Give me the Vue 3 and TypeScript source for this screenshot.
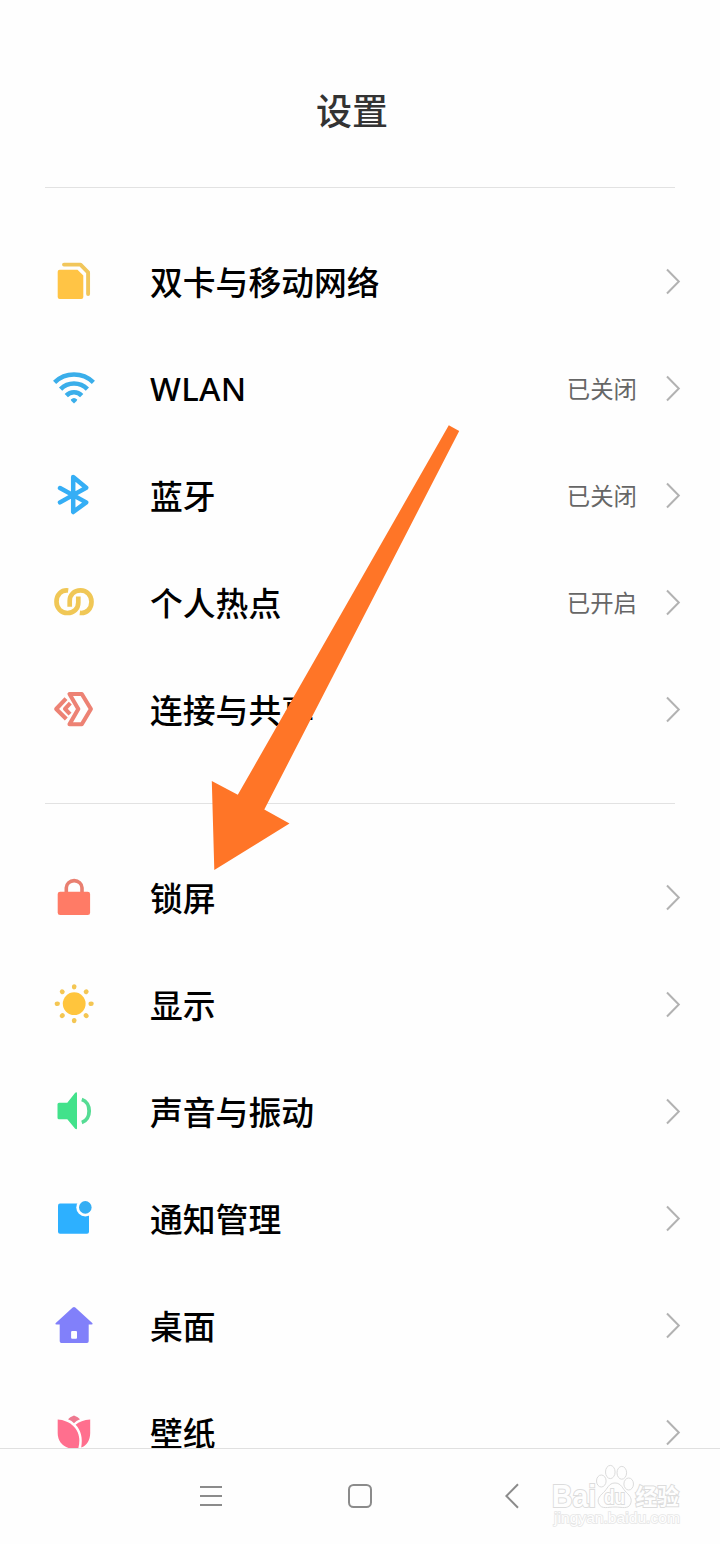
<script setup lang="ts">
interface Item {
  icon: string
  label: string
  latin?: boolean
  status?: string
}

const groups: Item[][] = [
  [
    { icon: 'sim', label: '双卡与移动网络' },
    { icon: 'wifi', label: 'WLAN', latin: true, status: '已关闭' },
    { icon: 'bluetooth', label: '蓝牙', status: '已关闭' },
    { icon: 'hotspot', label: '个人热点', status: '已开启' },
    { icon: 'share', label: '连接与共享' },
  ],
  [
    { icon: 'lock', label: '锁屏' },
    { icon: 'display', label: '显示' },
    { icon: 'sound', label: '声音与振动' },
    { icon: 'notice', label: '通知管理' },
    { icon: 'home', label: '桌面' },
    { icon: 'wallpaper', label: '壁纸' },
  ],
]

const rays = [0, 45, 90, 135, 180, 225, 270, 315]
</script>

<template>
  <div class="screen">
    <header class="header">
      <h1 class="title">设置</h1>
    </header>

    <main class="content">
      <section v-for="(group, g) in groups" :key="g" class="group">
        <div v-for="item in group" :key="item.label" class="row">
          <svg class="icon" width="48" height="49" viewBox="0 0 48 49" fill="none">
            <g v-if="item.icon === 'sim'">
              <path d="M9.7 12.7H27.5L33.3 18.5V40a2 2 0 0 1-2 2H9.7a2 2 0 0 1-2-2V14.7a2 2 0 0 1 2-2Z" fill="#ffc445" />
              <path d="M14 7.6H30.5L38.1 15.4V37" stroke="#f1c65b" stroke-width="3.9" stroke-linecap="round" stroke-linejoin="round" />
            </g>
            <g v-else-if="item.icon === 'wifi'" stroke="#3aaeea" stroke-width="4.5">
              <path d="M4.6 18.3A28 28 0 0 1 43.4 18.3" />
              <path d="M10.6 25.2A18.8 18.8 0 0 1 37.4 25.2" />
              <path d="M16.3 31.6A10.6 10.6 0 0 1 31.7 31.6" />
              <path d="M20.8 35.5Q24 32.4 27.2 35.5Q27.6 36.3 24 39.5Q20.4 36.3 20.8 35.5Z" fill="#3aaeea" stroke="none" />
            </g>
            <path v-else-if="item.icon === 'bluetooth'" d="M10 17L36.2 31.4L23.2 41V6L36.2 16.7L10 31.4" stroke="#35aef5" stroke-width="4.5" stroke-linecap="round" stroke-linejoin="round" />
            <g v-else-if="item.icon === 'hotspot'" stroke="#f0c756" stroke-width="4.7">
              <path d="M18.2 12.5C11.3 11.6 6.5 16.8 6.5 23.7C6.5 30.3 11.3 35 17.4 35C24 35 28.3 30.5 28.3 24.5V18.6" />
              <path d="M29.8 34.9C36.7 35.8 41.5 30.6 41.5 23.7C41.5 17.1 36.7 12.4 30.6 12.4C24 12.4 19.7 16.9 19.7 22.9V28.8" />
            </g>
            <g v-else-if="item.icon === 'share'" stroke="#ed8274" stroke-width="4.1" stroke-linejoin="round">
              <path d="M19.5 9H31.8L40.9 24L31.8 39.2H19.5L28.3 24Z" />
              <path d="M16 13.7L6.2 24L16.3 34" />
              <path d="M20.3 18.2L15 23.8L20 29.2" />
            </g>
            <g v-else-if="item.icon === 'lock'">
              <path d="M16.3 20V14.8a7.8 7.1 0 0 1 15.7 0V20" stroke="#e97f70" stroke-width="3.6" />
              <rect x="7.7" y="18.7" width="32.4" height="23.4" rx="2.4" fill="#ff7b66" />
            </g>
            <g v-else-if="item.icon === 'display'" fill="#ffc53d">
              <circle cx="24.2" cy="23.7" r="11.4" />
              <ellipse v-for="a in rays" :key="a" cx="24.2" cy="6.8" rx="2.3" ry="2.6" fill="#f4c653" :transform="`rotate(${a} 24.2 23.7)`" />
            </g>
            <g v-else-if="item.icon === 'sound'">
              <path d="M9 15.7H17.3L25.2 5.8Q27 4.6 27 6.4V41.2Q27 43 25.2 41.8L17.3 32.3H9Q7.5 32.3 7.5 30.8V17.2Q7.5 15.7 9 15.7Z" fill="#42e28b" />
              <path d="M31.8 12.5C41.6 15.5 41.6 32.5 31.8 35.5" stroke="#55dc94" stroke-width="3.8" />
            </g>
            <g v-else-if="item.icon === 'notice'">
              <rect x="8" y="9.6" width="31" height="30.2" rx="2" fill="#2db0ff" />
              <circle cx="35.3" cy="13.4" r="9" fill="#fefefe" />
              <circle cx="35.3" cy="13.4" r="6.3" fill="#34aef4" />
            </g>
            <g v-else-if="item.icon === 'home'">
              <path d="M22.7 6.5Q24 5.3 25.3 6.5L42.5 22.2Q43 23.4 41.5 23.4H38.7V40.2Q38.7 42 37 42H11.4Q9.7 42 9.7 40.2V23.4H6.5Q5 23.4 5.5 22.2Z" fill="#8180fa" />
              <rect x="21.1" y="30" width="5.9" height="7.8" rx="1" fill="#fefefe" />
            </g>
            <g v-else fill="#ff6f8e">
              <path d="M24 7.6Q28.4 9.2 30 11.3Q26 12.8 24 15.2Q22 12.8 18 11.3Q19.6 9.2 24 7.6Z" fill="#ee7990" />
              <path d="M7.7 11.4C22 12.3 33 23.5 28.2 40.6C16 42.3 7.7 35.5 7.7 25Z" />
              <path d="M40.2 11.4C34 11.7 28.8 13.7 25.6 16.7C30.8 22 33 29.8 31.2 39.6C36.8 37.5 40.2 32 40.2 25Z" />
            </g>
          </svg>
          <span class="label" :class="{ latin: item.latin }">{{ item.label }}</span>
          <span v-if="item.status" class="status">{{ item.status }}</span>
          <svg class="chevron" width="16" height="27" viewBox="0 0 16 27" fill="none">
            <path d="M2 1.5L13.8 13.5L2 25.5" stroke="#b2b2b2" stroke-width="2" />
          </svg>
        </div>
      </section>
    </main>

    <nav class="navbar">
      <svg class="nav-menu" width="24" height="24" viewBox="0 0 24 24" stroke="#8b8b8b" stroke-width="2">
        <path d="M1 3H23M1 12H23M1 21H23" />
      </svg>
      <svg class="nav-home" width="24" height="24" viewBox="0 0 24 24" fill="none" stroke="#8b8b8b" stroke-width="2">
        <rect x="1" y="1" width="22" height="22" rx="4.5" />
      </svg>
      <svg class="nav-back" width="16" height="26" viewBox="0 0 16 26" fill="none" stroke="#8b8b8b" stroke-width="2">
        <path d="M14 1.3L2.4 13L14 24.7" />
      </svg>
    </nav>

    <svg class="watermark" width="140" height="70" viewBox="0 0 140 70" fill="#fefefe" stroke="#dcdcdc" stroke-width="1">
      <text class="wm-latin" x="2" y="46.5" textLength="44" lengthAdjust="spacingAndGlyphs">Bai</text>
      <ellipse cx="51.3" cy="21" rx="4.8" ry="6" />
      <ellipse cx="60.3" cy="12" rx="4.8" ry="6.6" />
      <ellipse cx="71.8" cy="12.8" rx="4.8" ry="6.4" />
      <ellipse cx="78.7" cy="24" rx="4.8" ry="6" />
      <path d="M65 23C58.5 23 57.5 29 53.5 32.5C48.5 37 47 40 49 44C51.5 49.5 58 47 65 47C72 47 78 49.5 80.5 44C82.5 39 80 36 76.5 32.5C72.5 29 71.5 23 65 23Z" />
      <text class="wm-du" x="54" y="43.5" textLength="21" lengthAdjust="spacingAndGlyphs">du</text>
      <text class="wm-cjk" x="85.5" y="44.5" textLength="43.5" lengthAdjust="spacingAndGlyphs">经验</text>
      <text class="wm-url" x="4" y="62.5" textLength="126" lengthAdjust="spacingAndGlyphs">jingyan.baidu.com</text>
    </svg>

    <svg class="pointer" width="260" height="460" viewBox="0 0 260 460">
      <path d="M248.8 5.3L259.2 10.9L64.3 389.5L89.5 403.6L14.3 450L11.8 361L37.8 374.8Z" fill="#ff7527" />
    </svg>
  </div>
</template>

<style>
body {
  margin: 0;
  background: #fefefe;
}
</style>

<style scoped>
.screen {
  position: relative;
  display: flex;
  flex-direction: column;
  width: 720px;
  height: 1544px;
  overflow: hidden;
  background: #fefefe;
  font-family: "Noto Sans", "Noto Sans CJK SC", sans-serif;
}
.header {
  flex: none;
  box-sizing: border-box;
  height: 188px;
  margin: 0 45px;
  padding: 82px 16px 0 0;
  border-bottom: 1px solid #e2e2e2;
}
.title {
  margin: 0;
  font-family: "Noto Sans CJK SC", sans-serif;
  font-size: 36px;
  font-weight: 500;
  line-height: 54px;
  text-align: center;
  color: #333;
}
.content {
  flex: 1;
  min-height: 0;
  overflow: hidden;
}
.group {
  padding: 40px 0;
}
.group + .group::before {
  content: "";
  display: block;
  height: 1px;
  margin: -40px 45px 40px;
  background: #e2e2e2;
}
.row {
  display: flex;
  align-items: center;
  height: 107px;
  padding: 0 39px 0 50px;
}
.icon {
  flex: none;
  margin-right: 52px;
}
.label {
  flex: 1;
  padding-top: 2px;
  font-size: 32.8px;
  font-weight: 500;
  line-height: 48px;
  color: #000;
  white-space: nowrap;
}
.label.latin {
  padding-top: 0;
  letter-spacing: 0.3px;
}
.status {
  margin-right: 28px;
  padding-bottom: 1px;
  font-family: "Noto Sans CJK SC", sans-serif;
  font-size: 23.4px;
  line-height: 34px;
  color: #666;
}
.chevron {
  flex: none;
}
.navbar {
  flex: none;
  box-sizing: border-box;
  display: flex;
  align-items: center;
  height: 96px;
  padding: 0 0 2px 199px;
  border-top: 1px solid #e0e0e0;
  background: #fefefe;
}
.nav-home {
  margin-left: 125px;
}
.nav-back {
  margin-left: 132px;
}
.watermark {
  position: absolute;
  left: 550px;
  top: 1460px;
}
.watermark text {
  paint-order: stroke;
  stroke-width: 2px;
}
.watermark .wm-latin {
  font: bold 31px "Liberation Sans", sans-serif;
}
.watermark .wm-du {
  font: bold 20px "Liberation Sans", sans-serif;
}
.watermark .wm-cjk {
  font: 700 22.5px "Noto Sans CJK SC", sans-serif;
}
.watermark .wm-url {
  font: 15.5px "Liberation Sans", sans-serif;
  stroke: #e6e6e6;
  stroke-width: 1.6px;
}
.pointer {
  position: absolute;
  left: 200px;
  top: 420px;
}
</style>
